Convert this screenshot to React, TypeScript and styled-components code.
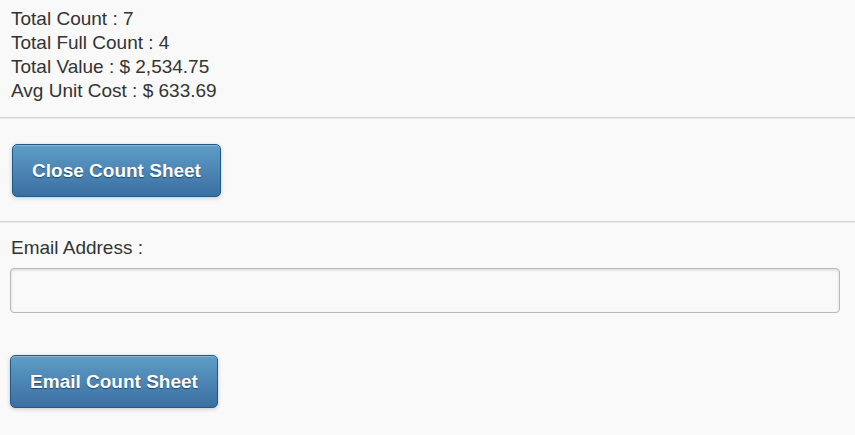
import React from "react";
import styled, { createGlobalStyle } from "styled-components";

const Global = createGlobalStyle`
  html, body { margin: 0; padding: 0; background: #f9f9f9; }
  body { font-family: "Liberation Sans", Arial, Helvetica, sans-serif; color: #333; }
`;

const Page = styled.div`
  display: flex;
  flex-direction: column;
  padding-top: 7px;
  width: 855px;
  height: 435px;
  box-sizing: border-box;
  overflow: hidden;
`;

const Stats = styled.div`
  display: flex;
  flex-direction: column;
  padding-left: 11px;
  font-size: 19px;
  line-height: 24px;
`;

const Rule = styled.div<{ $top: number }>`
  margin-top: ${(p) => p.$top}px;
  height: 2px;
  background: #cfcfcf;
  border-bottom: 1px solid #ececec;
  box-sizing: border-box;
`;

const ButtonRow = styled.div<{ $pad: string }>`
  display: flex;
  padding: ${(p) => p.$pad};
`;

const Button = styled.button<{ $w: number }>`
  width: ${(p) => p.$w}px;
  height: 53px;
  border: 1px solid #1f5a87;
  border-radius: 5px;
  background: linear-gradient(#5f9dc7, #3a6fa2);
  color: #fff;
  font-family: "Liberation Sans", Arial, sans-serif;
  font-weight: bold;
  font-size: 19px;
  text-shadow: 0 1px 1px #194b6e;
  box-shadow: 0 1px 4px rgba(0, 0, 0, 0.2), inset 0 1px 0 rgba(255, 255, 255, 0.25);
  padding: 0;
  cursor: pointer;
`;

const Field = styled.div`
  display: flex;
  flex-direction: column;
  padding: 13px 0 0 10px;
`;

const Label = styled.label`
  font-size: 19px;
  line-height: 24px;
  padding-left: 1px;
`;

const Input = styled.input`
  margin-top: 8px;
  width: 830px;
  height: 45px;
  box-sizing: border-box;
  border: 1px solid #b9b9b9;
  border-radius: 4px;
  background: #f9f9f9;
  box-shadow: inset 0 1px 3px rgba(0, 0, 0, 0.15);
  font-size: 19px;
  font-family: "Liberation Sans", Arial, sans-serif;
  padding: 0 8px;
  outline: none;
`;

export default function App() {
  return (
    <>
      <Global />
      <Page>
        <Stats>
          <span>Total Count : 7</span>
          <span>Total Full Count : 4</span>
          <span>Total Value : $ 2,534.75</span>
          <span>Avg Unit Cost : $ 633.69</span>
        </Stats>
        <Rule $top={14} />
        <ButtonRow $pad="25px 12px 24px">
          <Button $w={209}>Close Count Sheet</Button>
        </ButtonRow>
        <Rule $top={0} />
        <Field>
          <Label htmlFor="email">Email Address :</Label>
          <Input id="email" type="email" />
        </Field>
        <ButtonRow $pad="42px 10px 0">
          <Button $w={208}>Email Count Sheet</Button>
        </ButtonRow>
      </Page>
    </>
  );
}
